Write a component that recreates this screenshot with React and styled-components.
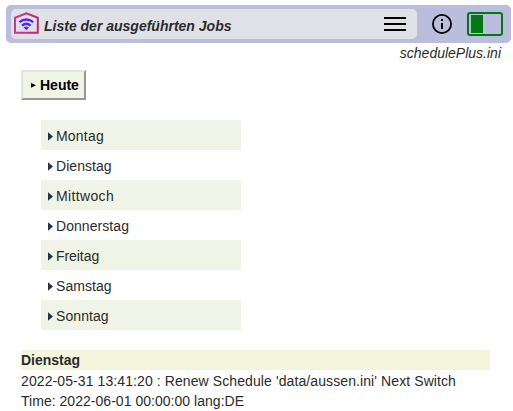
import React from "react";
import styled, { createGlobalStyle } from "styled-components";

const GlobalStyle = createGlobalStyle`
  * { box-sizing: border-box; }
  html, body { margin: 0; background: #fff; overflow: hidden; }
  body {
    font: 14px/20px "Liberation Sans", Arial, sans-serif;
    color: #2b2b2b;
  }
`;

const Page = styled.div`
  height: 411px;
  padding-top: 5px;
  overflow: hidden;
`;

const Header = styled.header`
  display: flex;
  align-items: center;
  width: 505px;
  height: 38px;
  margin-left: 6px;
  padding-left: 5px;
  border-radius: 5px;
  background: #babddb;
`;

const TitleBar = styled.div`
  display: flex;
  align-items: center;
  width: 406px;
  height: 30px;
  padding: 0 11px 0 3px;
  border-radius: 5px;
  background: #e0e1e6;
`;

const Title = styled.h1`
  flex: 1;
  margin: 4px 0 0 4px;
  font-size: 14px;
  line-height: 20px;
  font-style: italic;
  white-space: nowrap;
`;

const InfoIcon = styled.svg`
  margin-left: 14px;
`;

const Toggle = styled.div`
  width: 36px;
  height: 24px;
  margin-left: 14px;
  padding: 1px 2px;
  border: 2px solid #027a12;
  border-radius: 3px;
`;

const ToggleKnob = styled.div`
  width: 12px;
  height: 18px;
  background: #027a12;
`;

const FileName = styled.div`
  width: 501px;
  height: 27px;
  text-align: right;
  font-style: italic;
`;

const Content = styled.main`
  margin-left: 21px;
`;

const TodayButton = styled.button`
  display: flex;
  align-items: center;
  width: 65px;
  height: 30px;
  padding: 0 0 0 8px;
  border: 2px solid;
  border-color: #e2e2e2 #969696 #969696 #e2e2e2;
  background: #f0f4e5;
  color: #000;
  font: bold 14px/20px "Liberation Sans", Arial, sans-serif;
`;

const Arrow = styled.svg`
  flex: none;
  margin-right: ${(p) => p.$gap}px;
`;

const DayList = styled.ul`
  width: 200px;
  margin: 20px 0 20px 20px;
  padding: 0;
  list-style: none;
`;

const Day = styled.li`
  display: flex;
  align-items: center;
  height: 30px;
  padding: 2px 0 0 7px;
  letter-spacing: ${(p) => p.$spacing}px;
  &:nth-child(odd) { background: #f0f4e6; }
`;

const LogHeading = styled.h2`
  width: 469px;
  height: 20px;
  margin: 0 0 1px;
  background: #f3f6dc;
  font-size: 14px;
  line-height: 20px;
`;

const LogLine = styled.div`
  height: 20px;
  letter-spacing: ${(p) => p.$spacing}px;
  white-space: nowrap;
`;

const days = [
  { name: "Montag", spacing: 0.2 },
  { name: "Dienstag", spacing: 0.04 },
  { name: "Mittwoch", spacing: 0.35 },
  { name: "Donnerstag", spacing: 0.06 },
  { name: "Freitag", spacing: -0.06 },
  { name: "Samstag", spacing: 0.06 },
  { name: "Sonntag", spacing: 0.08 },
];

function HomeLogo() {
  return (
    <svg width="26" height="24" viewBox="0 0 26 24" fill="none">
      <defs>
        <linearGradient id="frame" x1="0" y1="0" x2="1" y2="0">
          <stop stopColor="#c63c91" />
          <stop offset="1" stopColor="#b92777" />
        </linearGradient>
      </defs>
      <path d="M1 20.7V5.7L12.4 1.3 23.8 5.7V20.7Z" stroke="url(#frame)" strokeWidth="2" />
      <path d="M5.4 10.2Q12.3 4.9 19.2 10.2M8 13.6Q12.3 9.8 16.6 13.6" stroke="#5524ed" strokeWidth="2.3" />
      <path d="M9.7 15.4Q12.3 13.5 14.9 15.4L12.3 18.3Z" fill="#5524ed" />
    </svg>
  );
}

export default function App() {
  return (
    <>
      <GlobalStyle />
      <Page>
        <Header>
          <TitleBar>
            <HomeLogo />
            <Title>Liste der ausgeführten Jobs</Title>
            <svg width="22" height="16" viewBox="0 0 22 16">
              <path d="M0 2h22M0 8h22M0 14h22" stroke="#000" strokeWidth="2.1" />
            </svg>
          </TitleBar>
          <InfoIcon width="22" height="22" viewBox="0 0 22 22" fill="none">
            <circle cx="11" cy="11" r="9.1" stroke="#000" strokeWidth="1.8" />
            <path d="M11 10v6M11 6v2" stroke="#000" strokeWidth="1.9" />
          </InfoIcon>
          <Toggle><ToggleKnob /></Toggle>
        </Header>
        <FileName>schedulePlus.ini</FileName>
        <Content>
          <TodayButton>
            <Arrow $gap={4} width="5" height="6" viewBox="0 0 5 6"><path d="M0 1 5 3.3 0 5.7Z" /></Arrow>
            Heute
          </TodayButton>
          <DayList>
            {days.map((day) => (
              <Day key={day.name} $spacing={day.spacing}>
                <Arrow $gap={3} width="5" height="9" viewBox="0 0 5 9"><path d="M0 .2 5 4.5 0 8.8Z" fill="#203449" /></Arrow>
                {day.name}
              </Day>
            ))}
          </DayList>
          <LogHeading>Dienstag</LogHeading>
          <LogLine $spacing={0.095}>2022-05-31 13:41:20 : Renew Schedule 'data/aussen.ini' Next Switch</LogLine>
          <LogLine $spacing={0.03}>Time: 2022-06-01 00:00:00 lang:DE</LogLine>
        </Content>
      </Page>
    </>
  );
}
